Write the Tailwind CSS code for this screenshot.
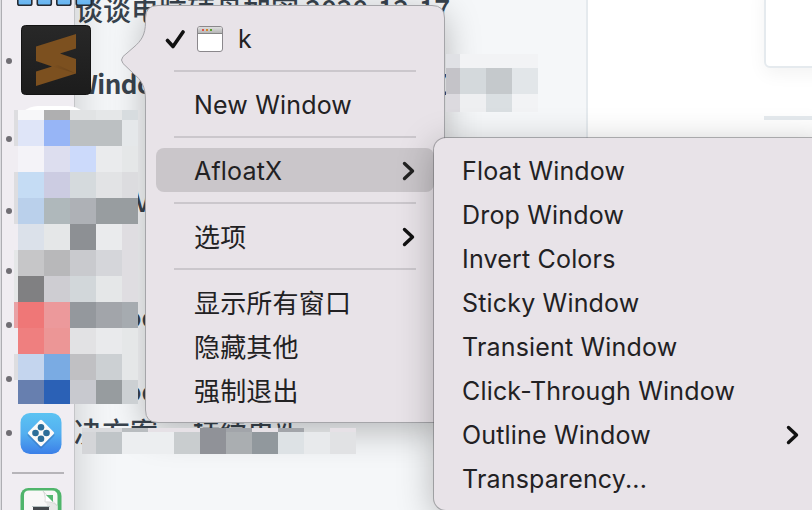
<!DOCTYPE html>
<html lang="zh-CN">
<head>
<meta charset="utf-8">
<title>Dock menu</title>
<script src="https://cdn.jsdelivr.net/npm/@tailwindcss/browser@4"></script>
</head>
<body>
<div class="relative h-[510px] w-[812px] overflow-hidden bg-white font-['Inter','Noto_Sans_CJK_SC',sans-serif] text-[#222123]">

<!-- page behind the menus -->
<main class="absolute inset-0 flex">
  <section class="relative h-full w-[588px] border-r-2 border-[#e5eaee] bg-[#f5f7f9] font-['Noto_Sans_CJK_SC',sans-serif] text-[28px] leading-[40px] font-medium whitespace-nowrap text-[#38434d]">
    <p class="absolute top-[-11px] left-[75px]">谈谈电脑硬盘加密 <span class="tracking-[-0.3px]">2020-12-17</span></p>
    <p class="absolute top-[63px] left-[74px] text-[26px] font-bold tracking-[-0.5px]">Windows</p>
    <p class="absolute top-[63px] left-[430px] font-bold">Z</p>
    <p class="absolute top-[180px] left-[134px] font-medium">V</p>
    <p class="absolute top-[296px] left-[124px] font-bold">oc</p>
    <p class="absolute top-[370px] left-[124px] font-bold">oc</p>
    <p class="absolute top-[411px] left-[74px]">决方案</p>
    <p class="absolute top-[411px] left-[193px] text-[27px]">持续更新</p>
  </section>
  <aside class="relative flex-1">
    <div class="absolute top-[-20px] left-[176px] h-[88px] w-[80px] rounded-md border-2 border-[#e5eaee] bg-white shadow-[0_6px_18px_rgba(0,0,0,0.05)]"></div>
    <div class="absolute top-[116px] left-[176px] h-1 w-[60px] bg-[#e5eaee]"></div>
  </aside>
</main>

<!-- shadows cast by the menu and the dock -->
<div class="absolute top-[6px] left-[146px] h-[416px] w-[298px] rounded-[12px] shadow-[0_8px_36px_rgba(0,0,0,0.28)]"></div>
<div class="absolute top-[-40px] left-[2px] h-[600px] w-[72px] shadow-[0_0_44px_rgba(0,0,0,0.2)]"></div>

<!-- pixelated block at the right of the menu -->
<svg class="absolute top-0 left-0" width="812" height="510" shape-rendering="crispEdges">
  <path fill="#f2f3f5" d="M446 54h92v58h-92z"/>
  <path fill="#e0e1e5" d="M446 54h14v14h-14z"/>
  <path fill="#c4c3c8" d="M446 68h14v26h-14z"/>
  <path fill="#d4d9dc" d="M460 68h26v26h-26z"/>
  <path fill="#c5c9cc" d="M486 68h26v26h-26z"/>
  <path fill="#e2e6e9" d="M512 68h26v26h-26z"/>
  <path fill="#dcdadf" d="M446 94h14v18h-14z"/>
  <path fill="#eeeff1" d="M460 94h26v18h-26z"/>
  <path fill="#dadfe2" d="M486 94h26v18h-26z"/>
</svg>

<!-- dock -->
<nav class="absolute top-0 left-0 h-full w-[75px] border-r border-[#c4c5c8] bg-[#f0edf2]">
  <div class="h-full w-[2px] border-r border-[#aeaeb3] bg-[#dcdce0]"></div>
</nav>
<svg class="absolute top-0 left-0" width="160" height="510">
  <defs>
    <linearGradient id="sky" x1="0" y1="0" x2="0" y2="1"><stop offset="0" stop-color="#5cc3f2"/><stop offset=".5" stop-color="#53aff0"/><stop offset="1" stop-color="#3b7fe8"/></linearGradient>
    <linearGradient id="dark" x1="0" y1="0" x2="0" y2="1"><stop offset="0" stop-color="#282828"/><stop offset="1" stop-color="#1c1c1c"/></linearGradient>
    <linearGradient id="fold" x1="0" y1="0" x2="1" y2="0"><stop offset="0" stop-color="#7c501f"/><stop offset="1" stop-color="#69421a"/></linearGradient>
    <linearGradient id="glass" x1="0" y1="0" x2="0" y2="1"><stop offset="0" stop-color="#8fc4f0"/><stop offset="1" stop-color="#63b4f2"/></linearGradient>
  </defs>
  <g fill="url(#glass)" stroke="#252a32" stroke-width="1.6">
    <rect x="17.8" y="-10" width="14" height="15.2" rx="1.8"/>
    <rect x="37.3" y="-10" width="14" height="15.2" rx="1.8"/>
    <rect x="56.8" y="-10" width="14" height="15.2" rx="1.8"/>
    <rect x="76.3" y="-10" width="15" height="15.2" rx="1.8"/>
  </g>
  <g fill="#706e74">
    <circle cx="9" cy="61" r="3"/><circle cx="9" cy="139" r="3"/><circle cx="9" cy="211" r="3"/><circle cx="9" cy="271" r="3"/><circle cx="9" cy="325" r="3"/><circle cx="9" cy="379" r="3"/><circle cx="9" cy="433" r="3"/>
  </g>
  <rect x="21.5" y="25.5" width="69" height="69" rx="4" fill="url(#dark)" stroke="#141414"/>
  <polygon fill="#7c501f" points="36,46.500 76,34 76,48.500 60,53.500 76,59 76,73.500 36,86 36,71.500 52,66.500 36,61"/>
  <polygon fill="url(#fold)" points="52,66.500 58,65 76,73.500"/>
  <path fill="#fff" d="M22 112Q30 106 38 106H68Q76 106 84 112z"/>
  <rect x="20.500" y="413" width="41" height="41" rx="9.500" fill="url(#sky)"/>
  <rect x="31" y="425" width="20" height="20" rx="1.500" transform="rotate(45 41 435)" fill="#285f9b" opacity=".35"/>
  <rect x="31.300" y="423.300" width="19.400" height="19.400" rx="1.500" transform="rotate(45 41 433)" fill="#fbfaf9"/>
  <g fill="#2c6d98"><circle cx="41" cy="427.300" r="3.300"/><circle cx="35.500" cy="433" r="3.300"/><circle cx="46.500" cy="433" r="3.300"/><circle cx="41" cy="438.700" r="3.300"/></g>
  <rect x="12" y="472" width="52" height="2" fill="#b6b4b9"/>
  <rect x="20.500" y="488" width="41" height="40" rx="8" fill="#4fb56b"/>
  <path d="M24 516V495Q24 490.500 29 490.500H52Q57.500 490.500 57.500 496V516z" fill="#f8f8f7"/>
  <path d="M43 491Q46 494 46 501Q53 501 57.500 506V516H50Z" fill="#e6e7e6"/>
  <path d="M43 491Q46 494 45 502Q53 501 57.500 506z" fill="#fff" stroke="#cfd1cf" stroke-width=".7"/>
  <path d="M46 495H53V502z" fill="#55b872"/>
  <path d="M33 506.500h16v6h-16z" fill="#43484b"/><path d="M32 506h18v1h-18z" fill="#b7c3c3"/>

  <!-- pixelated dock icons -->
  <g shape-rendering="crispEdges">
    <path fill="#e5e7e8" d="M14 110h124v294H18v-24h-4z"/>
    <path fill="#dddde0" d="M14 110h4v36h-4zM14 172h4v52h-4zM14 354h4v26h-4z"/>
    <path fill="#f0edf2" d="M14 146h4v26h-4zM14 224h4v26h-4zM14 328h4v26h-4zM14 380h4v24h-4z"/>
    <path fill="#f7f7f9" d="M18 110h26v10H18z"/><path fill="#afafb0" d="M44 110h26v10H44z"/><path fill="#e1e3e4" d="M70 110h26v10H70z"/><path fill="#d7dcdf" d="M122 110h16v10h-16z"/>
    <path fill="#dfe5f8" d="M18 120h26v26H18z"/><path fill="#97b5f6" d="M44 120h26v26H44z"/><path fill="#bcc0c2" d="M70 120h52v26H70z"/><path fill="#e5e8ea" d="M122 120h16v26h-16z"/>
    <path fill="#f4f3f8" d="M18 146h26v26H18z"/><path fill="#dddeef" d="M44 146h26v26H44z"/><path fill="#ccdafb" d="M70 146h26v26H70z"/><path fill="#eaebed" d="M96 146h26v26H96z"/>
    <path fill="#c5dcf4" d="M18 172h26v26H18z"/><path fill="#cccce2" d="M44 172h26v26H44z"/><path fill="#d5dadd" d="M70 172h26v26H70z"/><path fill="#e2e3e5" d="M96 172h26v26H96z"/><path fill="#dcdcdf" d="M122 172h16v26h-16z"/>
    <path fill="#bad0eb" d="M18 198h26v26H18z"/><path fill="#afb8bb" d="M44 198h26v26H44z"/><path fill="#aeb1b6" d="M70 198h26v26H70z"/><path fill="#989da0" d="M96 198h42v26H96z"/>
    <path fill="#dbe1ea" d="M18 224h26v26H18z"/><path fill="#8d9094" d="M70 224h26v26H70z"/><path fill="#eaebed" d="M96 224h26v26H96z"/><path fill="#dfdde1" d="M122 224h16v78h-16z"/>
    <path fill="#c6c6c8" d="M18 250h26v26H18z"/><path fill="#b8b8ba" d="M44 250h26v26H44z"/><path fill="#c9cace" d="M70 250h26v26H70z"/><path fill="#d5d6da" d="M96 250h26v26H96z"/>
    <path fill="#808082" d="M18 276h26v26H18z"/><path fill="#cecdd2" d="M44 276h26v26H44z"/><path fill="#d2d7da" d="M70 276h26v26H70z"/>
    <path fill="#e9a1a5" d="M14 302h4v26h-4z"/><path fill="#ef7777" d="M18 302h26v26H18z"/><path fill="#ec999b" d="M44 302h26v26H44z"/><path fill="#94989d" d="M70 302h26v26H70z"/><path fill="#a2a5aa" d="M96 302h26v26H96z"/><path fill="#a6abb0" d="M122 302h16v26h-16z"/>
    <path fill="#ef7f7f" d="M18 328h26v26H18z"/><path fill="#ec9696" d="M44 328h26v26H44z"/><path fill="#e2e2e4" d="M70 328h26v26H70z"/><path fill="#e9eaec" d="M96 328h26v26H96z"/>
    <path fill="#c4d5ee" d="M18 354h26v26H18z"/><path fill="#7aabe3" d="M44 354h26v26H44z"/><path fill="#c0c0c3" d="M70 354h26v26H70z"/><path fill="#ccd0d3" d="M96 354h26v26H96z"/>
    <path fill="#677faf" d="M18 380h26v24H18z"/><path fill="#2b61b6" d="M44 380h26v24H44z"/><path fill="#c8c9cf" d="M70 380h26v24H70z"/><path fill="#979c9f" d="M96 380h26v24H96z"/><path fill="#ccd0d3" d="M122 380h16v24h-16z"/>
  </g>
</svg>

<!-- pixelated strip below the menu -->
<svg class="absolute top-0 left-0" width="400" height="510" shape-rendering="crispEdges">
  <path fill="#d9dadd" d="M82 428h40v4H82z"/><path fill="#b9bdc0" d="M122 428h26v4h-26z"/><path fill="#e6e1e6" d="M148 428h52v4h-52zM252 428h26v4h-26zM330 428h26v4h-26z"/><path fill="#a2a5aa" d="M226 428h26v4h-26zM278 428h26v4h-26z"/><path fill="#909298" d="M200 428h26v4h-26z"/>
  <path fill="#d4d5d8" d="M82 432h14v22H82z"/><path fill="#c0c5c8" d="M96 432h26v22H96z"/><path fill="#eceef0" d="M122 432h52v22h-52z"/><path fill="#c9cdcf" d="M174 432h26v22h-26z"/><path fill="#909298" d="M200 432h26v22h-26z"/><path fill="#aaaeb1" d="M226 432h26v22h-26z"/><path fill="#91989d" d="M252 432h26v22h-26z"/><path fill="#dde2e5" d="M278 432h26v22h-26z"/><path fill="#e8eaec" d="M304 432h26v22h-26z"/><path fill="#e1e2e4" d="M330 432h26v22h-26z"/>
</svg>

<!-- dock item menu -->
<svg class="absolute top-0 left-0" width="460" height="440">
  <path d="M158 5.500H432Q444.500 5.500 444.500 18V422.500H158Q145.500 422.500 145.500 410V100C145.500 86 141 80 134 74L123 63.500Q120 60 123 56.500L134 47C141 41 145.500 35 145.500 22V18Q145.500 5.500 158 5.500z" fill="#e8e3e8" stroke="#a5a5a9"/>
</svg>
<ul class="absolute top-[6px] left-[146px] flex w-[298px] flex-col px-[10px] pt-[10px] text-[25px] tracking-[0.18px]">
  <li class="flex h-11 items-center pl-[9px]">
    <svg class="mt-[2px]" width="22" height="22" viewBox="0 0 22 22" fill="none" stroke="#111" stroke-width="3.600" stroke-linecap="round" stroke-linejoin="round"><path d="M2.500 12.500 8 18.500 18 4"/></svg>
    <svg class="mt-[1px] ml-[9px]" width="28" height="28" viewBox="0 0 28 28"><defs><linearGradient id="bar" x1="0" y1="0" x2="0" y2="1"><stop offset="0" stop-color="#dedede"/><stop offset="1" stop-color="#b5b5b5"/></linearGradient></defs><rect x="1.500" y="1.500" width="25" height="25" rx="2.500" fill="#fff" stroke="#8b888c"/><path d="M2 8V4Q2 2 4 2H24Q26 2 26 4V8z" fill="url(#bar)"/><path d="M2 8.500H26" stroke="#858585"/><path d="M6 4h2v2H6z" fill="#e2534a"/><path d="M10 4h2v2h-2z" fill="#d08a2d"/><path d="M14 4h2v2h-2z" fill="#5a9e2f"/></svg>
    <span class="ml-[14px] pt-[4px]">k</span>
  </li>
  <li class="flex h-[22px] items-center px-[18px]"><hr class="w-full border-0 border-t-2 border-[#cbc7cc]"></li>
  <li class="flex h-11 items-center pl-[38px]"><span class="pt-[4px]">New Window</span></li>
  <li class="flex h-[22px] items-center px-[18px]"><hr class="w-full border-0 border-t-2 border-[#cbc7cc]"></li>
  <li class="flex h-11 w-[278px] items-center justify-between rounded-[8px] bg-[#cac6ca] pr-[18px] pl-[38px]"><span class="pt-[4px]">AfloatX</span>
    <svg class="mt-[2px]" width="14" height="22" viewBox="0 0 14 22" fill="none" stroke="#222" stroke-width="3.400" stroke-linecap="round" stroke-linejoin="round"><path d="M2.500 3.500 10.500 11 2.500 18.500"/></svg></li>
  <li class="flex h-[22px] items-center px-[18px]"><hr class="w-full border-0 border-t-2 border-[#cbc7cc]"></li>
  <li class="flex h-11 items-center justify-between pr-[18px] pl-[38px]"><span class="pt-[2px] text-[26px]">选项</span>
    <svg class="mt-[2px]" width="14" height="22" viewBox="0 0 14 22" fill="none" stroke="#111" stroke-width="3.400" stroke-linecap="round" stroke-linejoin="round"><path d="M2.500 3.500 10.500 11 2.500 18.500"/></svg></li>
  <li class="flex h-[22px] items-center px-[18px]"><hr class="w-full border-0 border-t-2 border-[#cbc7cc]"></li>
  <li class="flex h-11 items-center pl-[38px] text-[26px]"><span class="pt-[3px]">显示所有窗口</span></li>
  <li class="flex h-11 items-center pl-[38px] text-[26px]"><span class="pt-[3px]">隐藏其他</span></li>
  <li class="flex h-11 items-center pl-[38px] text-[26px]"><span class="pt-[3px]">强制退出</span></li>
</ul>

<!-- AfloatX submenu -->
<ul class="absolute top-[138px] left-[434px] flex h-[372px] w-[400px] flex-col rounded-[12px] bg-[#e8e3e8] pt-[12px] pl-[28px] text-[25px] tracking-[0.18px] whitespace-nowrap shadow-[0_0_0_1px_rgba(90,90,95,0.45),0_8px_36px_rgba(0,0,0,0.28)]">
  <li class="flex h-11 items-center"><span>Float Window</span></li>
  <li class="flex h-11 items-center"><span>Drop Window</span></li>
  <li class="flex h-11 items-center"><span>Invert Colors</span></li>
  <li class="flex h-11 items-center"><span>Sticky Window</span></li>
  <li class="flex h-11 items-center"><span>Transient Window</span></li>
  <li class="flex h-11 items-center"><span>Click-Through Window</span></li>
  <li class="flex h-11 items-center justify-between pr-[34px]"><span>Outline Window</span>
    <svg class="-mt-[2px]" width="14" height="22" viewBox="0 0 14 22" fill="none" stroke="#111" stroke-width="3.400" stroke-linecap="round" stroke-linejoin="round"><path d="M2.500 3.500 10.500 11 2.500 18.500"/></svg></li>
  <li class="flex h-11 items-center"><span>Transparency...</span></li>
</ul>
</div>
</body>
</html>
